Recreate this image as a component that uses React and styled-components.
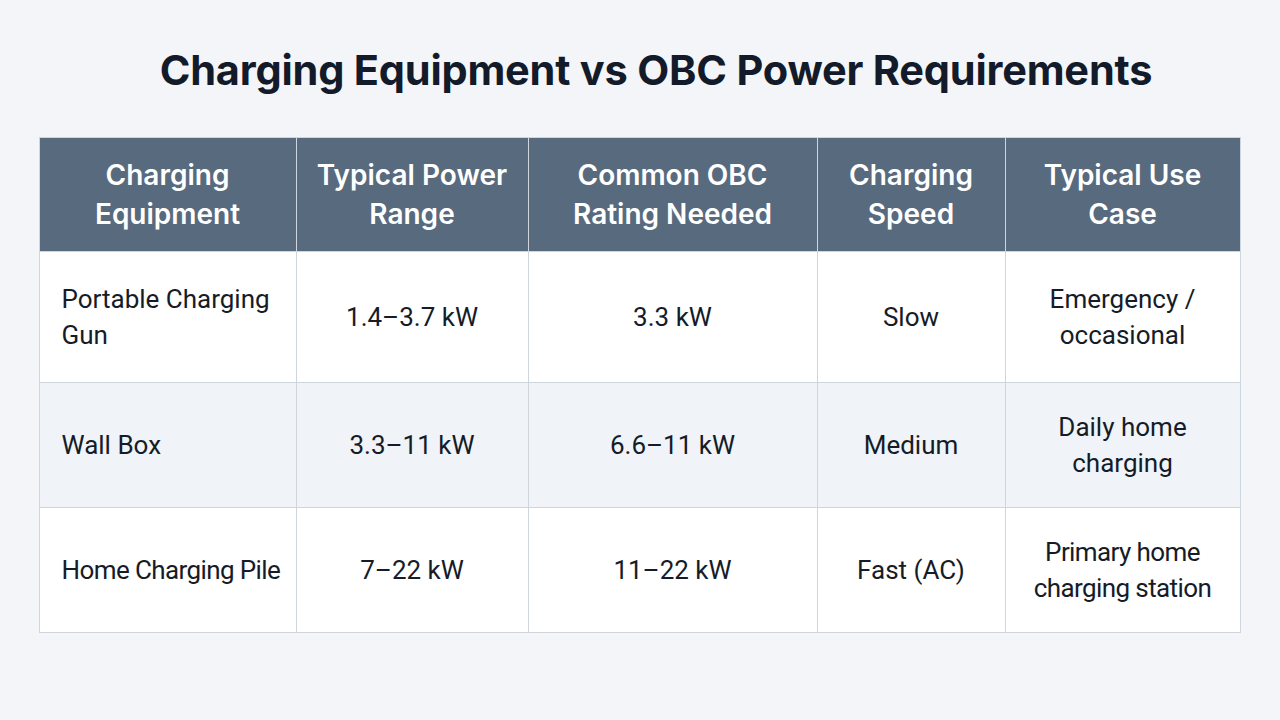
import React from "react";
import styled, { createGlobalStyle } from "styled-components";

const GlobalStyle = createGlobalStyle`
  html, body {
    margin: 0;
    padding: 0;
    background: #f4f5f8;
    font-family: Inter, "Noto Sans", "Liberation Sans", sans-serif;
  }
`;

const columns = [
  { title: ["Charging", "Equipment"], width: 257, align: "left" },
  { title: ["Typical Power", "Range"], width: 232 },
  { title: ["Common OBC", "Rating Needed"], width: 289 },
  { title: ["Charging", "Speed"], width: 188 },
  { title: ["Typical Use", "Case"], width: 235 },
];

const rows = [
  {
    height: 131,
    cells: [["Portable Charging", "Gun"], ["1.4–3.7 kW"], ["3.3 kW"], ["Slow"], ["Emergency /", "occasional"]],
  },
  {
    height: 125,
    cells: [["Wall Box"], ["3.3–11 kW"], ["6.6–11 kW"], ["Medium"], ["Daily home", "charging"]],
  },
  {
    height: 125,
    cells: [["Home Charging Pile"], ["7–22 kW"], ["11–22 kW"], ["Fast (AC)"], ["Primary home", "charging station"]],
  },
];

const Page = styled.div`
  width: 1280px;
  height: 720px;
  box-sizing: border-box;
  padding-top: 44px;
  display: flex;
  flex-direction: column;
  align-items: center;
`;

const Title = styled.h1`
  margin: 0 0 41px;
  padding-left: 32px;
  font-size: 41.5px;
  font-weight: 700;
  line-height: 52px;
  color: #131b2a;
  letter-spacing: -0.2px;
`;

const Table = styled.table`
  border-collapse: collapse;
  table-layout: fixed;
  width: 1201px;
  margin-left: -1px;
  border: 1px solid #cfd5dc;
`;

const HeadCell = styled.th`
  background: #586a7e;
  color: #ffffff;
  font-size: 28px;
  font-weight: 600;
  line-height: 39px;
  height: 114px;
  padding: 0 10px;
  text-align: center;
  border: 1px solid #cfd5dc;
  border-top: none;
  border-bottom: none;
  box-sizing: border-box;
`;

const Row = styled.tr`
  background: ${(p) => (p.$alt ? "#f0f3f7" : "#ffffff")};
`;

const Cell = styled.td`
  font-family: Roboto, Inter, "Liberation Sans", sans-serif;
  font-size: 26px;
  line-height: 36px;
  letter-spacing: ${(p) => (p.$tight ? "-0.6px" : "0")};
  color: #151c28;
  text-align: ${(p) => p.$align || "center"};
  padding: ${(p) => (p.$align === "left" ? "0 4px 0 22px" : "0 8px")};
  border: 1px solid #cfd5dc;
  vertical-align: middle;
  box-sizing: border-box;
`;

const Lines = ({ lines }) =>
  lines.map((l, i) => (
    <React.Fragment key={i}>
      {i > 0 && <br />}
      {l}
    </React.Fragment>
  ));

export default function App() {
  return (
    <>
      <GlobalStyle />
      <Page>
        <Title>Charging Equipment vs OBC Power Requirements</Title>
        <Table>
          <colgroup>
            {columns.map((c, i) => (
              <col key={i} style={{ width: c.width }} />
            ))}
          </colgroup>
          <thead>
            <tr>
              {columns.map((c, i) => (
                <HeadCell key={i}>
                  <Lines lines={c.title} />
                </HeadCell>
              ))}
            </tr>
          </thead>
          <tbody>
            {rows.map((r, ri) => (
              <Row key={ri} $alt={ri === 1} style={{ height: r.height }}>
                {r.cells.map((cell, ci) => (
                  <Cell
                    key={ci}
                    $align={columns[ci].align}
                    $tight={ri === 2 && (ci === 0 || ci === 4)}
                  >
                    <Lines lines={cell} />
                  </Cell>
                ))}
              </Row>
            ))}
          </tbody>
        </Table>
      </Page>
    </>
  );
}
